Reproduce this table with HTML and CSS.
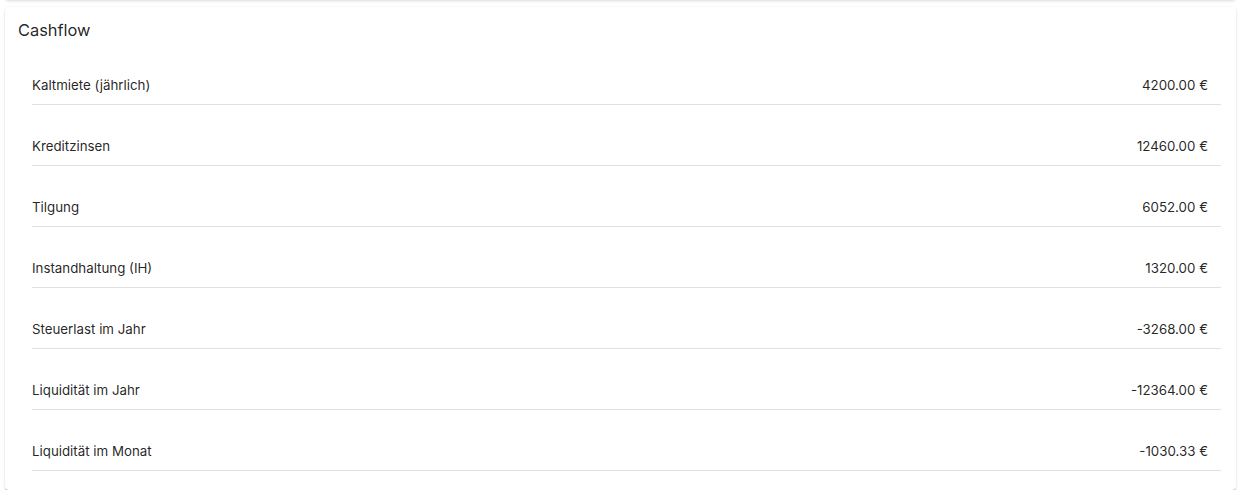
FILE: index.html
```html
<!DOCTYPE html>
<html lang="de">
<head>
<meta charset="utf-8">
<link rel="stylesheet" href="styles.css">
</head>
<body>
<div class="top-shadow"></div>
<section class="card">
  <h2 class="card-title">Cashflow</h2>
  <ul class="list">
    <li class="row"><span>Kaltmiete (jährlich)</span><span>4200.00 €</span></li>
    <li class="row"><span>Kreditzinsen</span><span>12460.00 €</span></li>
    <li class="row"><span>Tilgung</span><span>6052.00 €</span></li>
    <li class="row"><span>Instandhaltung (IH)</span><span>1320.00 €</span></li>
    <li class="row"><span>Steuerlast im Jahr</span><span>-3268.00 €</span></li>
    <li class="row"><span>Liquidität im Jahr</span><span>-12364.00 €</span></li>
    <li class="row"><span>Liquidität im Monat</span><span>-1030.33 €</span></li>
  </ul>
</section>
</body>
</html>
```
FILE: styles.css
```css
html, body {
  margin: 0;
  background: #fff;
}
body {
  padding: 7px 8px 0 5px;
  font-family: Inter, "Liberation Sans", Arial, sans-serif;
  color: rgba(0, 0, 0, 0.87);
  position: relative;
}
.top-shadow {
  position: absolute;
  left: 5px;
  right: 8px;
  top: -4px;
  height: 4px;
  border-radius: 0 0 4px 4px;
  box-shadow: 0 1px 3px rgba(0,0,0,0.15);
}
.card {
  background: #fff;
  border-radius: 4px;
  box-shadow: 0 2px 1px -1px rgba(0,0,0,0.2), 0 1px 1px 0 rgba(0,0,0,0.14), 0 1px 3px 0 rgba(0,0,0,0.12);
  padding: 13px 15px 19px 13px;
}
.card-title {
  margin: 0;
  font-size: 16.4px;
  font-weight: 400;
  line-height: 20px;
}
.list {
  list-style: none;
  margin: 4px 0 0 14px;
  padding: 0;
}
.row {
  display: flex;
  justify-content: space-between;
  font-size: 13.3px;
  line-height: 17px;
  padding: 33px 13px 10px 0;
  border-bottom: 1px solid #e0e0e0;
}
```
